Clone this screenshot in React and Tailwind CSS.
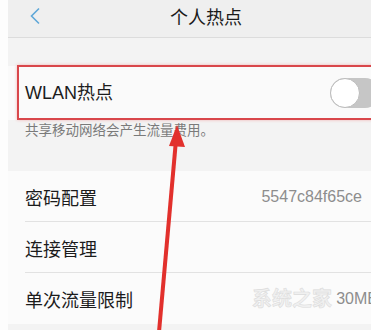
import React from 'react';

const font = { fontFamily: '"Noto Sans CJK SC", "Noto Sans", "Liberation Sans", sans-serif' };

const Row = ({ label, value, valueClass = '', divider = true }) => (
  <div className="h-[51px] flex items-center pl-[17px] relative">
    <span className="text-[18px] text-[#1c1c1c] leading-none">{label}</span>
    {value && (
      <span className={`ml-auto text-[16px] text-[#8d8d8d] leading-none ${valueClass}`} style={{ fontFamily: '"Liberation Sans", sans-serif' }}>
        {value}
      </span>
    )}
    {divider && <div className="absolute bottom-0 left-[17px] right-0 h-px bg-[#e2e2e2]" />}
  </div>
);

export default function App() {
  return (
    <div className="w-[371px] h-[330px] overflow-hidden relative flex bg-white" style={font}>
      {/* left white strip */}
      <div className="w-[8px] shrink-0 bg-[#fdfdfd]" />

      <div className="w-[380px] shrink-0 bg-[#f3f3f3] flex flex-col">
        {/* header */}
        <div className="h-[38px] bg-[#efefef] border-b border-[#dcdcdc] flex items-center pb-[6px] shrink-0">
          <svg className="ml-[21px]" width="12" height="18" viewBox="0 0 12 18">
            <path d="M10 1.5 L2.5 9 L10 16.5" fill="none" stroke="#5fa8d8" strokeWidth="1.6" />
          </svg>
          <span className="ml-[129px] text-[18px] text-[#1a1a1a] leading-none">个人热点</span>
        </div>

        <div className="h-[28px] shrink-0" />

        {/* WLAN row */}
        <div className="h-[54px] bg-[#fafafa] flex items-center pl-[17px] shrink-0">
          <span className="text-[18px] text-[#1c1c1c] leading-none" style={{ fontFamily: '"Liberation Sans", "Noto Sans CJK SC", sans-serif' }}>
            WLAN热点
          </span>
          <div className="ml-auto mr-[8px] w-[50px] h-[30px] rounded-full bg-[#c6c6c6] relative">
            <div className="absolute left-0 top-0 w-[30px] h-[30px] rounded-full bg-white border border-[#bcbcbc]" />
          </div>
        </div>

        <div className="h-[51px] shrink-0 pl-[17px] pt-[2px]">
          <span className="block text-[13.5px] text-[#7a7a7a] leading-[14px]">共享移动网络会产生流量费用。</span>
        </div>

        {/* settings list */}
        <div className="bg-[#fbfbfb] shrink-0">
          <Row label="密码配置" value="5547c84f65ce" valueClass="mr-[26px]" />
          <Row label="连接管理" />
          <Row label="单次流量限制" value="30MB" valueClass="mr-[10px]" divider={false} />
        </div>
      </div>

      {/* red highlight box */}
      <div className="absolute left-[17px] top-[65px] w-[370px] h-[55px] border-2 border-[#d9474b] shadow-[0_0_3px_#f2b4b4]" />

      {/* watermark */}
      <div className="absolute left-[252px] top-[288px] text-[20px] font-bold text-[#f0f0f0] leading-none" style={{ WebkitTextStroke: '0.6px #dcdcdc' }}>
        系统之家
      </div>

      {/* red arrow */}
      <svg className="absolute left-0 top-0" width="371" height="330" viewBox="0 0 371 330">
        <line x1="159" y1="332" x2="176" y2="140" stroke="#e2302c" strokeWidth="4" />
        <polygon points="177,125 185,147 169,146" fill="#e2302c" />
      </svg>
    </div>
  );
}
